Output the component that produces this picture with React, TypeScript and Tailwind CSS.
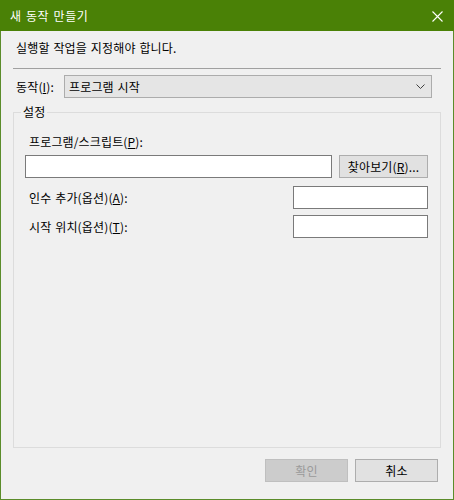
import React from "react";

export default function App() {
  return (
    <div className="w-[454px] h-[500px] flex flex-col text-[12px] leading-[16px] text-black tracking-[0.15px] [word-spacing:1px] font-['Noto_Sans_CJK_KR','Noto_Sans',sans-serif] select-none">
      <div className="h-[31px] shrink-0 bg-[#4a8106] flex items-center justify-between pl-[10px] pr-[11px]">
        <span className="text-white text-[12px] tracking-[0.6px]">새 동작 만들기</span>
        <svg width="11" height="11" viewBox="0 0 11 11" className="mt-[1px]">
          <path d="M0.5 0.5 L10.5 10.5 M10.5 0.5 L0.5 10.5" stroke="#ffffff" strokeWidth="1.1" fill="none" />
        </svg>
      </div>
      <div className="flex-1 flex flex-col bg-[#f0f0f0] border-x border-b border-[#5b8c2a]">
        <div className="mt-[9px] pl-[15px] h-[16px]">실행할 작업을 지정해야 합니다.</div>
        <div className="mt-[12px] mx-[12px] h-[1px] bg-[#a0a0a0]" />
        <div className="mt-[6px] pl-[15px] flex items-center h-[23px]">
          <div className="w-[48px]">
            동작(<u>I</u>):
          </div>
          <div className="w-[368px] h-[23px] bg-[#e5e5e5] border border-[#acacac] flex items-center justify-between pl-[4px] pr-[6px]">
            <span>프로그램 시작</span>
            <svg width="9" height="5" viewBox="0 0 9 5">
              <path d="M0.5 0.5 L4.5 4.5 L8.5 0.5" stroke="#404040" strokeWidth="1" fill="none" />
            </svg>
          </div>
        </div>
        <div className="relative mt-[14px] mx-[12px] h-[336px] border border-[#dcdcdc] flex flex-col">
          <span className="absolute -top-[9px] left-[7px] px-[2px] bg-[#f0f0f0]">설정</span>
          <div className="mt-[21px] pl-[15px] h-[16px]">
            프로그램/스크립트(<u>P</u>):
          </div>
          <div className="mt-[5px] pl-[11px] flex items-center gap-[7px]">
            <div className="w-[307px] h-[23px] bg-white border border-[#7a7a7a]" />
            <div className="w-[89px] h-[23px] bg-[#e1e1e1] border border-[#adadad] flex items-center justify-center">
              찾아보기(<u>R</u>)...
            </div>
          </div>
          <div className="mt-[8px] flex items-center h-[23px]">
            <div className="pl-[15px] w-[279px]">
              인수 추가(옵션)(<u>A</u>):
            </div>
            <div className="w-[135px] h-[23px] bg-white border border-[#7a7a7a]" />
          </div>
          <div className="mt-[6px] flex items-center h-[23px]">
            <div className="pl-[15px] w-[279px]">
              시작 위치(옵션)(<u>T</u>):
            </div>
            <div className="w-[135px] h-[23px] bg-white border border-[#7a7a7a]" />
          </div>
        </div>
        <div className="mt-[11px] pr-[15px] flex justify-end gap-[7px]">
          <div className="w-[83px] h-[23px] bg-[#cccccc] border border-[#bfbfbf] text-[#9a9a9a] flex items-center justify-center">
            확인
          </div>
          <div className="w-[83px] h-[23px] bg-[#e1e1e1] border border-[#adadad] flex items-center justify-center">
            취소
          </div>
        </div>
      </div>
    </div>
  );
}
